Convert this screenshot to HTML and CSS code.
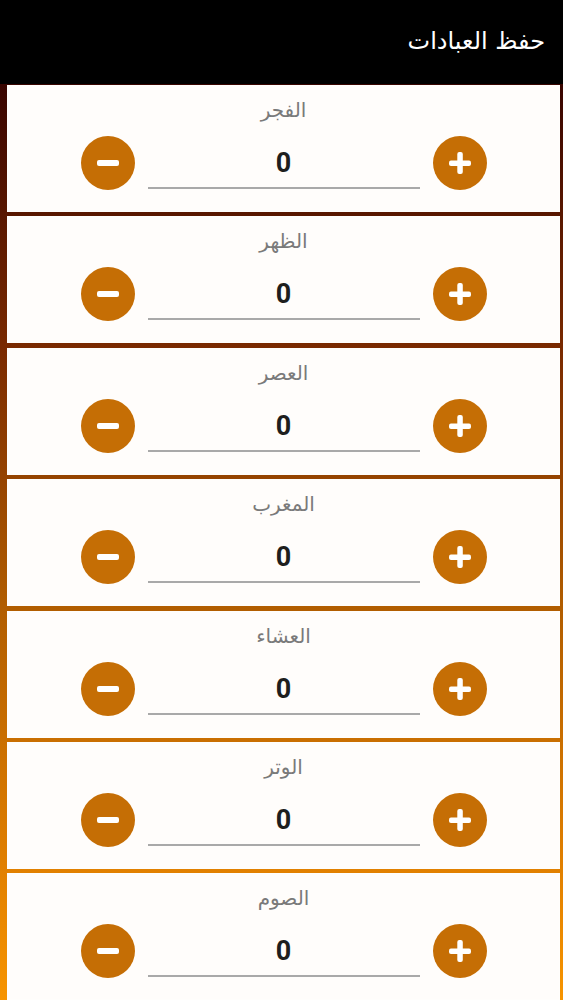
FILE: index.html
```html
<!DOCTYPE html>
<html lang="ar" dir="rtl">
<head>
<meta charset="utf-8">
<title>حفظ العبادات</title>
<link rel="stylesheet" href="styles.css">
</head>
<body>
<header class="bar"><h1 class="title">حفظ العبادات</h1></header>
<main class="list">
  <section class="card">
    <div class="label">الفجر</div>
    <div class="row">
      <button class="btn"><svg viewBox="0 0 54 54" width="54" height="54"><circle cx="27" cy="27" r="27" fill="#c56e05"/><rect x="16" y="24.5" width="22" height="5.5" rx="2" fill="#fff"/><rect x="24.3" y="16" width="5.5" height="22" rx="2" fill="#fff"/></svg></button>
      <div class="field">0</div>
      <button class="btn"><svg viewBox="0 0 54 54" width="54" height="54"><circle cx="27" cy="27" r="27" fill="#c56e05"/><rect x="16" y="24" width="22" height="6" rx="2" fill="#fff"/></svg></button>
    </div>
  </section>
  <section class="card">
    <div class="label">الظهر</div>
    <div class="row">
      <button class="btn"><svg viewBox="0 0 54 54" width="54" height="54"><circle cx="27" cy="27" r="27" fill="#c56e05"/><rect x="16" y="24.5" width="22" height="5.5" rx="2" fill="#fff"/><rect x="24.3" y="16" width="5.5" height="22" rx="2" fill="#fff"/></svg></button>
      <div class="field">0</div>
      <button class="btn"><svg viewBox="0 0 54 54" width="54" height="54"><circle cx="27" cy="27" r="27" fill="#c56e05"/><rect x="16" y="24" width="22" height="6" rx="2" fill="#fff"/></svg></button>
    </div>
  </section>
  <section class="card">
    <div class="label">العصر</div>
    <div class="row">
      <button class="btn"><svg viewBox="0 0 54 54" width="54" height="54"><circle cx="27" cy="27" r="27" fill="#c56e05"/><rect x="16" y="24.5" width="22" height="5.5" rx="2" fill="#fff"/><rect x="24.3" y="16" width="5.5" height="22" rx="2" fill="#fff"/></svg></button>
      <div class="field">0</div>
      <button class="btn"><svg viewBox="0 0 54 54" width="54" height="54"><circle cx="27" cy="27" r="27" fill="#c56e05"/><rect x="16" y="24" width="22" height="6" rx="2" fill="#fff"/></svg></button>
    </div>
  </section>
  <section class="card">
    <div class="label">المغرب</div>
    <div class="row">
      <button class="btn"><svg viewBox="0 0 54 54" width="54" height="54"><circle cx="27" cy="27" r="27" fill="#c56e05"/><rect x="16" y="24.5" width="22" height="5.5" rx="2" fill="#fff"/><rect x="24.3" y="16" width="5.5" height="22" rx="2" fill="#fff"/></svg></button>
      <div class="field">0</div>
      <button class="btn"><svg viewBox="0 0 54 54" width="54" height="54"><circle cx="27" cy="27" r="27" fill="#c56e05"/><rect x="16" y="24" width="22" height="6" rx="2" fill="#fff"/></svg></button>
    </div>
  </section>
  <section class="card">
    <div class="label">العشاء</div>
    <div class="row">
      <button class="btn"><svg viewBox="0 0 54 54" width="54" height="54"><circle cx="27" cy="27" r="27" fill="#c56e05"/><rect x="16" y="24.5" width="22" height="5.5" rx="2" fill="#fff"/><rect x="24.3" y="16" width="5.5" height="22" rx="2" fill="#fff"/></svg></button>
      <div class="field">0</div>
      <button class="btn"><svg viewBox="0 0 54 54" width="54" height="54"><circle cx="27" cy="27" r="27" fill="#c56e05"/><rect x="16" y="24" width="22" height="6" rx="2" fill="#fff"/></svg></button>
    </div>
  </section>
  <section class="card">
    <div class="label">الوتر</div>
    <div class="row">
      <button class="btn"><svg viewBox="0 0 54 54" width="54" height="54"><circle cx="27" cy="27" r="27" fill="#c56e05"/><rect x="16" y="24.5" width="22" height="5.5" rx="2" fill="#fff"/><rect x="24.3" y="16" width="5.5" height="22" rx="2" fill="#fff"/></svg></button>
      <div class="field">0</div>
      <button class="btn"><svg viewBox="0 0 54 54" width="54" height="54"><circle cx="27" cy="27" r="27" fill="#c56e05"/><rect x="16" y="24" width="22" height="6" rx="2" fill="#fff"/></svg></button>
    </div>
  </section>
  <section class="card">
    <div class="label">الصوم</div>
    <div class="row">
      <button class="btn"><svg viewBox="0 0 54 54" width="54" height="54"><circle cx="27" cy="27" r="27" fill="#c56e05"/><rect x="16" y="24.5" width="22" height="5.5" rx="2" fill="#fff"/><rect x="24.3" y="16" width="5.5" height="22" rx="2" fill="#fff"/></svg></button>
      <div class="field">0</div>
      <button class="btn"><svg viewBox="0 0 54 54" width="54" height="54"><circle cx="27" cy="27" r="27" fill="#c56e05"/><rect x="16" y="24" width="22" height="6" rx="2" fill="#fff"/></svg></button>
    </div>
  </section>
</main>
</body>
</html>
```
FILE: styles.css
```css
html, body {
  margin: 0;
  padding: 0;
}
body {
  width: 563px;
  height: 1000px;
  overflow: hidden;
  background: linear-gradient(to bottom, #1a0000 0px, #3a0500 90px, #7a2a00 350px, #b05c00 600px, #e07f00 860px, #f79400 1000px);
  font-family: "DejaVu Sans", "Noto Sans", sans-serif;
}
.bar {
  height: 84px;
  background: #000;
  display: flex;
  align-items: center;
  padding: 0 18px;
}
.title {
  margin: 0;
  color: #fff;
  font-size: 24px;
  font-weight: normal;
  line-height: 32px;
  padding-bottom: 2px;
}
.list {
  display: flex;
  flex-direction: column;
  gap: 4.4px;
  padding: 1px 3px 0 7px;
}
.card {
  height: 127px;
  box-sizing: border-box;
  background: #fffdfb;
  border: 1px solid rgba(255, 255, 255, 0.35);
  padding-top: 11px;
  display: flex;
  flex-direction: column;
  align-items: center;
}
.label {
  color: #7a7a7a;
  font-size: 20px;
  line-height: 26px;
}
.row {
  margin-top: 13px;
  display: flex;
  align-items: center;
  gap: 13px;
}
.btn {
  width: 54px;
  height: 54px;
  padding: 0;
  margin: 0;
  border: 0;
  background: none;
  display: block;
}
.btn svg {
  display: block;
}
.field {
  width: 272px;
  height: 46px;
  padding-top: 4px;
  line-height: 44px;
  text-align: center;
  border-bottom: 2px solid #a9a9a9;
  font-family: Roboto, "Liberation Sans", sans-serif;
  font-weight: bold;
  font-size: 27px;
  color: #1e1e1e;
}
```
